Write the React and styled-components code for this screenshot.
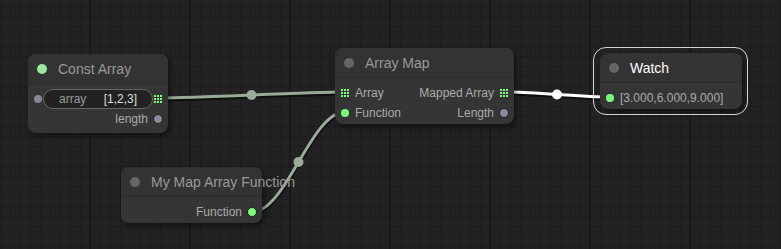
import React from "react";
import styled, { createGlobalStyle } from "styled-components";

const GlobalStyle = createGlobalStyle`
  html, body {
    margin: 0;
    padding: 0;
    background: #222;
  }
  body {
    font-family: "Liberation Sans", Arial, sans-serif;
  }
`;

const Canvas = styled.div`
  position: relative;
  width: 781px;
  height: 249px;
  overflow: hidden;
  background-color: #222;
  background-image:
    linear-gradient(to right, #1a1a1a 2px, transparent 2px),
    linear-gradient(to right, #1c1c1c 1px, transparent 1px),
    linear-gradient(to bottom, #1c1c1c 1px, transparent 1px);
  background-size: 100px 100%, 10px 10px, 10px 10px;
  background-position: 89px 0, 0 0, 0 6px;
`;

const LinkLayer = styled.svg`
  position: absolute;
  left: 0;
  top: 0;
`;

const Node = styled.div`
  position: absolute;
  left: ${(p) => p.$x}px;
  top: ${(p) => p.$y}px;
  width: ${(p) => p.$w}px;
  height: ${(p) => p.$h}px;
  background: #353535;
  border-radius: 8px;
  box-shadow: 2px 3px 5px rgba(0, 0, 0, 0.45);
  box-sizing: border-box;
`;

const Selection = styled.div`
  position: absolute;
  inset: -6px -6px -6px -7px;
  border: 1.5px solid #d4d4d4;
  border-radius: 13px;
  pointer-events: none;
`;

const Title = styled.div`
  height: 30px;
  display: flex;
  align-items: center;
  padding-left: 9px;
  border-bottom: 1px solid #2b2b2b;
  background: #333;
  border-radius: 8px 8px 0 0;
  box-sizing: border-box;
  white-space: nowrap;
`;

const TitleDot = styled.span`
  width: 10px;
  height: 10px;
  border-radius: 50%;
  background: ${(p) => p.$color || "#666"};
  flex: none;
`;

const TitleText = styled.span`
  margin-left: 11px;
  font-size: 14px;
  color: ${(p) => (p.$selected ? "#fff" : "#999")};
`;

const Body = styled.div`
  padding-top: 5px;
`;

const Row = styled.div`
  height: 20px;
  display: flex;
  align-items: center;
  padding: 0 6px;
  font-size: 12px;
  color: #aaa;
`;

const Side = styled.div`
  display: flex;
  align-items: center;
  gap: 6px;
  margin-left: ${(p) => (p.$right ? "auto" : "0")};
`;

const Dot = styled.span`
  width: ${(p) => (p.$ring ? 10 : 8)}px;
  height: ${(p) => (p.$ring ? 10 : 8)}px;
  margin: ${(p) => (p.$ring ? "0 -1px" : "0")};
  border-radius: 50%;
  background: ${(p) => p.$color};
  box-sizing: border-box;
  border: ${(p) => (p.$ring ? "1.5px solid #1c1c1c" : "none")};
  flex: none;
`;

const GridIcon = styled.span`
  width: 8px;
  height: 8px;
  flex: none;
  display: grid;
  grid-template-columns: repeat(3, 2px);
  grid-template-rows: repeat(3, 2px);
  gap: 1px;
  & > i {
    background: #7f7;
  }
`;

const Widget = styled.div`
  flex: 1;
  height: 20px;
  margin: 0 1px;
  box-sizing: border-box;
  border: 1px solid #666;
  border-radius: 10px;
  background: #222;
  display: flex;
  align-items: center;
  justify-content: space-between;
  padding: 0 15px;
  font-size: 12px;
`;

const WidgetLabel = styled.span`
  color: #999;
`;

const WidgetValue = styled.span`
  color: #ddd;
`;

const Grid = () => (
  <GridIcon>
    {Array.from({ length: 9 }).map((_, i) => (
      <i key={i} />
    ))}
  </GridIcon>
);

const links = [
  { from: [158, 98], to: [345, 92], color: "#9a9" },
  { from: [252, 212], to: [345, 112], color: "#9a9" },
  { from: [504, 92], to: [610, 97], color: "#fff" },
];

function curve(a, b) {
  const d = Math.hypot(b[0] - a[0], b[1] - a[1]) * 0.25;
  const c1 = [a[0] + d, a[1]];
  const c2 = [b[0] - d, b[1]];
  const mid = [
    (a[0] + 3 * c1[0] + 3 * c2[0] + b[0]) / 8,
    (a[1] + 3 * c1[1] + 3 * c2[1] + b[1]) / 8,
  ];
  return {
    d: `M${a[0]} ${a[1]} C${c1[0]} ${c1[1]} ${c2[0]} ${c2[1]} ${b[0]} ${b[1]}`,
    mid,
  };
}

function Links() {
  return (
    <LinkLayer width="781" height="249">
      {links.map((l, i) => {
        const c = curve(l.from, l.to);
        return (
          <g key={i}>
            <path d={c.d} transform="translate(0 1)" stroke="rgba(0,0,0,0.55)" strokeWidth="5" fill="none" />
            <path d={c.d} stroke={l.color} strokeWidth="3" fill="none" />
            <circle cx={c.mid[0]} cy={c.mid[1]} r="5" fill={l.color} />
          </g>
        );
      })}
    </LinkLayer>
  );
}

export default function App() {
  return (
    <>
      <GlobalStyle />
      <Canvas>
        <Links />

        <Node $x={28} $y={54} $w={140} $h={79}>
          <Title>
            <TitleDot $color="#9be89b" />
            <TitleText>Const Array</TitleText>
          </Title>
          <Body>
            <Row>
              <Dot $color="#889" />
              <Widget>
                <WidgetLabel>array</WidgetLabel>
                <WidgetValue>[1,2,3]</WidgetValue>
              </Widget>
              <Grid />
            </Row>
            <Row>
              <Side $right>
                <span>length</span>
                <Dot $color="#889" $ring />
              </Side>
            </Row>
          </Body>
        </Node>

        <Node $x={335} $y={48} $w={179} $h={76}>
          <Title>
            <TitleDot />
            <TitleText>Array Map</TitleText>
          </Title>
          <Body>
            <Row>
              <Side>
                <Grid />
                <span>Array</span>
              </Side>
              <Side $right>
                <span>Mapped Array</span>
                <Grid />
              </Side>
            </Row>
            <Row>
              <Side>
                <Dot $color="#7f7" />
                <span>Function</span>
              </Side>
              <Side $right>
                <span>Length</span>
                <Dot $color="#889" $ring />
              </Side>
            </Row>
          </Body>
        </Node>

        <Node $x={600} $y={53} $w={142} $h={56}>
          <Selection />
          <Title>
            <TitleDot />
            <TitleText $selected>Watch</TitleText>
          </Title>
          <Body>
            <Row>
              <Side>
                <Dot $color="#7f7" />
                <span>[3.000,6.000,9.000]</span>
              </Side>
            </Row>
          </Body>
        </Node>

        <Node $x={121} $y={167} $w={141} $h={56}>
          <Title>
            <TitleDot />
            <TitleText>My Map Array Function</TitleText>
          </Title>
          <Body>
            <Row>
              <Side $right>
                <span>Function</span>
                <Dot $color="#7f7" $ring />
              </Side>
            </Row>
          </Body>
        </Node>
      </Canvas>
    </>
  );
}
